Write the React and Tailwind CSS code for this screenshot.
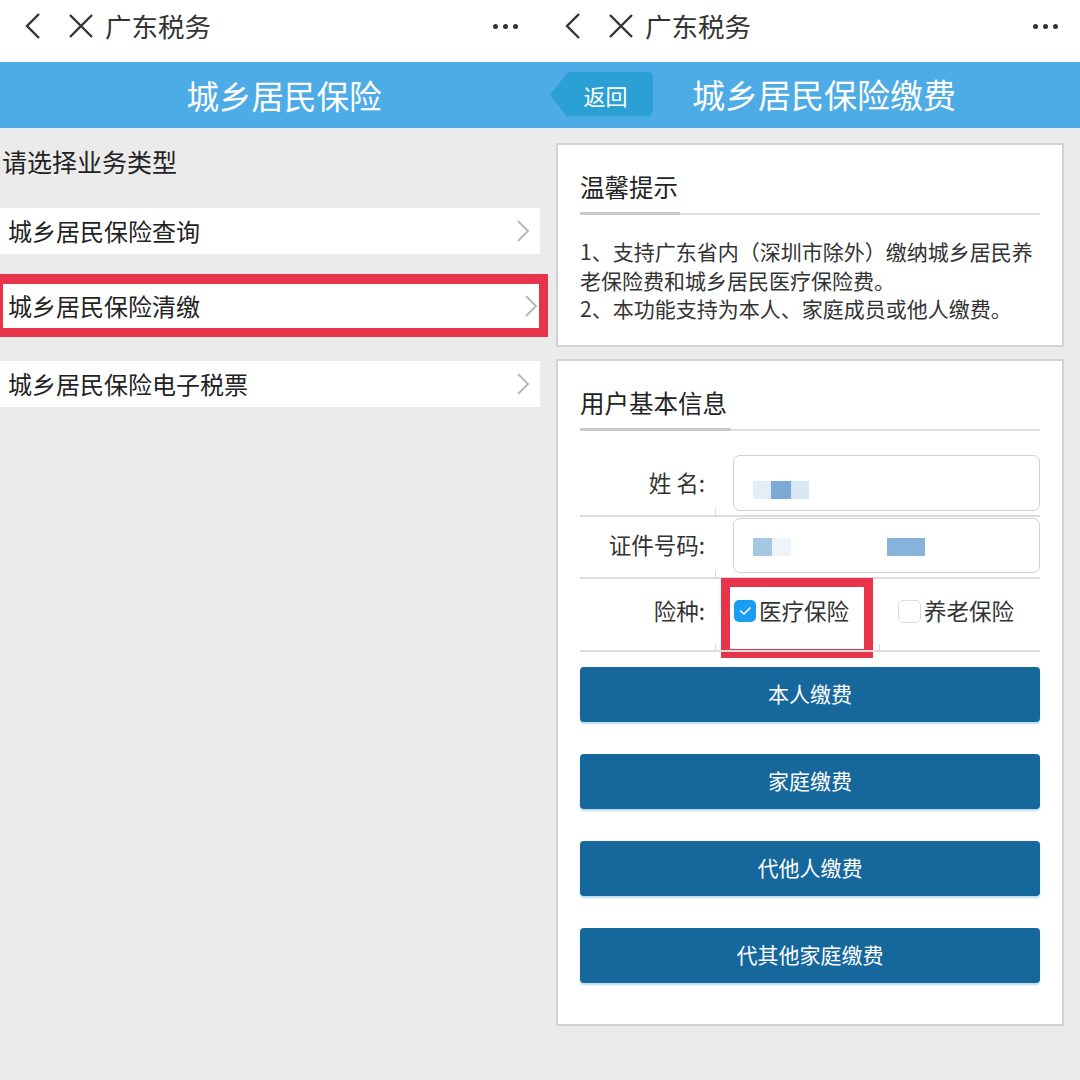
import React from 'react';

const FONT = { fontFamily: '"Noto Sans CJK SC", "Noto Sans", sans-serif' };

function TopBar() {
  return (
    <div className="h-[62px] bg-white flex items-center pb-[10px] pl-[24px] pr-[22px]">
      <svg width="18" height="28" viewBox="0 0 18 28" className="text-[#333]">
        <path d="M15 2 L3 14 L15 26" fill="none" stroke="currentColor" strokeWidth="2.4" />
      </svg>
      <svg width="26" height="26" viewBox="0 0 26 26" className="ml-[26px] text-[#333]">
        <path d="M2 2 L24 24 M24 2 L2 24" fill="none" stroke="currentColor" strokeWidth="2.4" />
      </svg>
      <span className="ml-[11px] text-[26.5px] text-[#333] leading-none">广东税务</span>
      <div className="ml-auto flex gap-[5px]">
        <span className="w-[5px] h-[5px] rounded-full bg-[#333]" />
        <span className="w-[5px] h-[5px] rounded-full bg-[#333]" />
        <span className="w-[5px] h-[5px] rounded-full bg-[#333]" />
      </div>
    </div>
  );
}

function Chevron() {
  return (
    <svg width="14" height="24" viewBox="0 0 14 24" className="text-[#b5b5b5]">
      <path d="M2 2 L12 12 L2 22" fill="none" stroke="currentColor" strokeWidth="1.8" />
    </svg>
  );
}

function LeftPanel() {
  return (
    <div className="w-[540px] h-full bg-[#ebebeb] flex flex-col">
      <TopBar />
      <div className="h-[66px] bg-[#4dabe6] flex items-center justify-center pl-[28px] text-white text-[32.5px]">
        城乡居民保险
      </div>
      <div className="pt-[19px] pl-[2px] text-[25px] leading-[28px] text-[#222]">请选择业务类型</div>
      <div className="mt-[33px] h-[46px] bg-white flex items-center pl-[8px] pr-[10px] text-[24px] text-[#222]">
        <span>城乡居民保险查询</span>
        <span className="ml-auto"><Chevron /></span>
      </div>
      <div className="relative z-10 mt-[20px] ml-[-6px] w-[554px] border-[9px] border-t-[10px] border-[#e8344b]">
        <div className="h-[44px] bg-white flex items-center pl-[5px] pr-[1px] text-[24px] text-[#222]">
          <span>城乡居民保险清缴</span>
          <span className="ml-auto"><Chevron /></span>
        </div>
      </div>
      <div className="mt-[24px] h-[46px] bg-white flex items-center pl-[8px] pr-[10px] text-[24px] text-[#222]">
        <span>城乡居民保险电子税票</span>
        <span className="ml-auto"><Chevron /></span>
      </div>
    </div>
  );
}

function SectionTitle({ children, bar }) {
  return (
    <div>
      <div className="text-[24.5px] leading-[30px] text-[#222]">{children}</div>
      <div className="mt-[10px] relative h-[3px]">
        <div className="absolute left-0 right-0 bottom-0 h-[2px] bg-[#e0e0e0]" />
        <div className={`absolute left-0 top-0 h-[3px] bg-[#cacaca] ${bar}`} />
      </div>
    </div>
  );
}

function RowFoot({ cols }) {
  return (
    <div className="relative mt-[-2px] h-[8px] flex border-b-2 border-[#dcdcdc]">
      <div className="w-[135px]" />
      {cols.map((c, i) => (
        <div key={i} className={`border-l border-[#d6d6d6] ${c}`} />
      ))}
    </div>
  );
}

function ActionButton({ children }) {
  return (
    <div className="h-[55px] rounded-[4px] bg-[#15679c] shadow-[0_2px_2px_rgba(60,150,200,0.35)] flex items-center justify-center text-white text-[21px]">
      {children}
    </div>
  );
}

function RightPanel() {
  return (
    <div className="w-[540px] h-full bg-[#ebebeb] flex flex-col">
      <TopBar />
      <div className="h-[66px] bg-[#4dabe6] flex items-center">
        <div className="relative ml-[10px] w-[103px] h-[46px] flex items-center justify-center pl-[8px]">
          <svg className="absolute inset-0" width="103" height="46" viewBox="0 0 103 46">
            <path d="M18 0 H97 Q103 0 103 6 V40 Q103 46 97 46 H18 L0 23 Z" fill="#2aa0d5" />
            <path d="M18 45 H97 Q102 45 102.5 40" fill="none" stroke="#5cbbe6" strokeWidth="1" />
          </svg>
          <span className="relative text-white text-[22px]">返回</span>
        </div>
        <div className="ml-[39px] text-white text-[33px]">城乡居民保险缴费</div>
      </div>

      <div className="px-[16px] pt-[15px]">
        <div className="bg-white border-2 border-[#d2d2d2] px-[22px] pt-[27px] pb-[22px]">
          <SectionTitle bar="w-[100px]">温馨提示</SectionTitle>
          <div className="mt-[22px] text-[21px] leading-[28.5px] text-[#333]">
            <div className="whitespace-nowrap">1、支持广东省内（深圳市除外）缴纳城乡居民养</div>
            <div className="whitespace-nowrap">老保险费和城乡居民医疗保险费。</div>
            <div className="whitespace-nowrap">2、本功能支持为本人、家庭成员或他人缴费。</div>
          </div>
        </div>

        <div className="mt-[12px] h-[667px] bg-white border-2 border-[#d2d2d2] px-[22px] pt-[27px]">
          <SectionTitle bar="w-[151px]">用户基本信息</SectionTitle>

          <div className="mt-[24px] text-[22.5px] text-[#333]">
            <div className="flex items-center h-[56px]">
              <div className="w-[125px] text-right">姓 名:</div>
              <div className="ml-[28px] flex-1 h-[56px] rounded-[7px] border border-[#cfcfcf] flex items-center pl-[19px] pt-[14px]">
                <div className="flex h-[18px]">
                  <span className="w-[18px] bg-[#e3eef8]" />
                  <span className="w-[20px] bg-[#7aaad5]" />
                  <span className="w-[18px] bg-[#d7e7f5]" />
                </div>
              </div>
            </div>
            <RowFoot cols={['flex-1']} />

            <div className="flex items-center h-[55px] mt-[1px]">
              <div className="w-[125px] text-right">证件号码:</div>
              <div className="ml-[28px] flex-1 h-[55px] rounded-[7px] border border-[#cfcfcf] flex items-center pl-[19px] pt-[4px]">
                <div className="flex h-[18px]">
                  <span className="w-[19px] bg-[#a7c8e2]" />
                  <span className="w-[19px] bg-[#eef4fa]" />
                  <span className="w-[96px]" />
                  <span className="w-[38px] bg-[#87b3db]" />
                </div>
              </div>
            </div>
            <RowFoot cols={['flex-1']} />

            <div className="relative flex items-center h-[67px] pb-[2px]">
              <div className="w-[125px] text-right">险种:</div>
              <div className="ml-[29px] w-[164px] flex items-center">
                <span className="w-[22px] h-[22px] rounded-[5px] bg-[#1a9df0] flex items-center justify-center">
                  <svg width="14" height="10" viewBox="0 0 14 10">
                    <path d="M2 4.5 L6 8 L12.5 1.5" fill="none" stroke="white" strokeWidth="1.6" />
                  </svg>
                </span>
                <span className="ml-[3px]">医疗保险</span>
              </div>
              <div className="flex items-center">
                <span className="w-[23px] h-[23px] rounded-[5px] border border-[#dcdcdc] bg-white" />
                <span className="ml-[3px]">养老保险</span>
              </div>
              <div className="absolute left-[141px] top-[-1px] w-[152px] h-[80px] border-[9px] border-[#e8344b]" />
            </div>
            <RowFoot cols={['w-[164px]', 'flex-1']} />
          </div>

          <div className="mt-[15px] flex flex-col gap-[32px]">
            <ActionButton>本人缴费</ActionButton>
            <ActionButton>家庭缴费</ActionButton>
            <ActionButton>代他人缴费</ActionButton>
            <ActionButton>代其他家庭缴费</ActionButton>
          </div>
        </div>
      </div>
    </div>
  );
}

export default function App() {
  return (
    <div className="w-[1080px] h-[1080px] flex overflow-hidden" style={FONT}>
      <LeftPanel />
      <RightPanel />
    </div>
  );
}
